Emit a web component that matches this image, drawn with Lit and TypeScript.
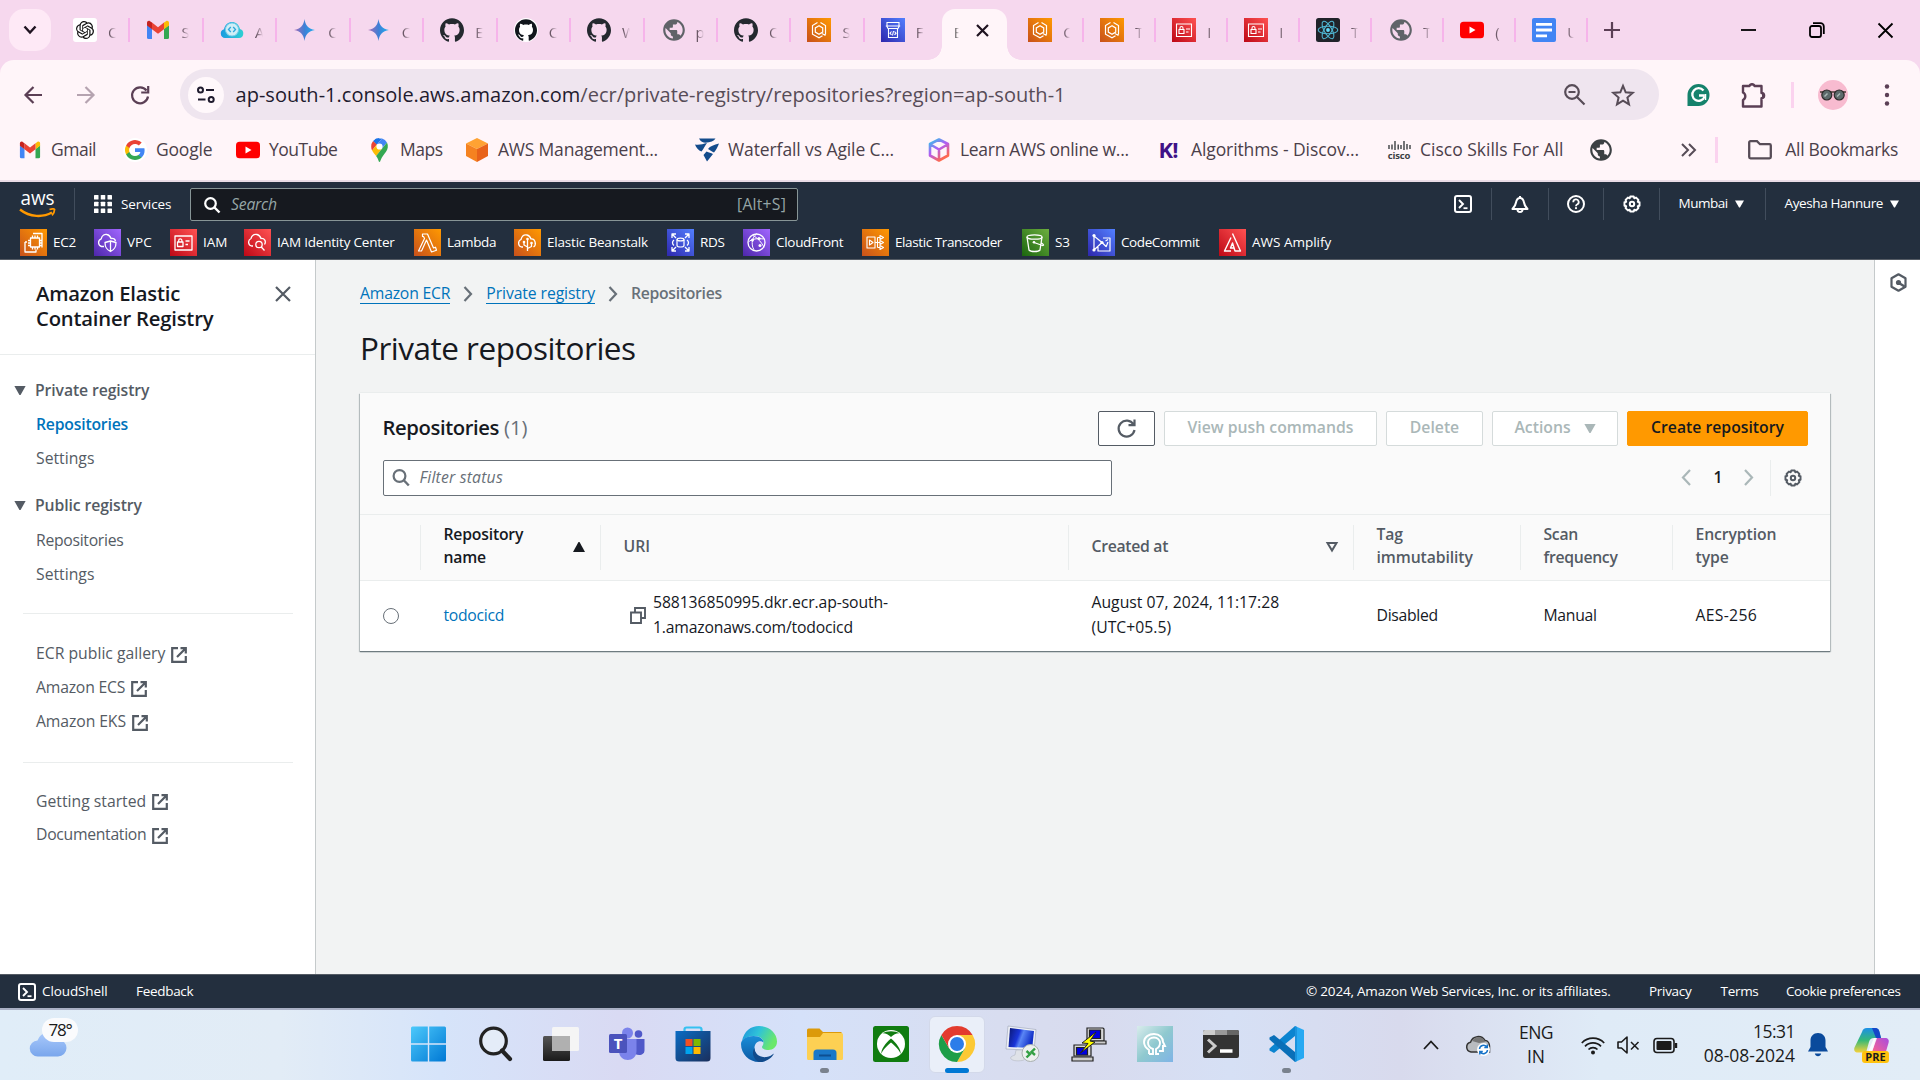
import { LitElement, html, css, svg, type TemplateResult } from "lit";
import { customElement } from "lit/decorators.js";

const GITHUB = "M12 .297c-6.63 0-12 5.373-12 12 0 5.303 3.438 9.8 8.205 11.385.6.113.82-.258.82-.577 0-.285-.01-1.04-.015-2.04-3.338.724-4.042-1.61-4.042-1.61C4.422 18.07 3.633 17.7 3.633 17.7c-1.087-.744.084-.729.084-.729 1.205.084 1.838 1.236 1.838 1.236 1.07 1.835 2.809 1.305 3.495.998.108-.776.417-1.305.76-1.605-2.665-.3-5.466-1.332-5.466-5.93 0-1.31.465-2.38 1.235-3.22-.135-.303-.54-1.523.105-3.176 0 0 1.005-.322 3.3 1.23.96-.267 1.98-.399 3-.405 1.02.006 2.04.138 3 .405 2.28-1.552 3.285-1.23 3.285-1.23.645 1.653.24 2.873.12 3.176.765.84 1.23 1.91 1.23 3.22 0 4.61-2.805 5.625-5.475 5.92.42.36.81 1.096.81 2.22 0 1.606-.015 2.896-.015 3.286 0 .315.21.69.825.57C20.565 22.092 24 17.592 24 12.297c0-6.627-5.373-12-12-12";
const OPENAI = "M22.2819 9.8211a5.9847 5.9847 0 0 0-.5157-4.9108 6.0462 6.0462 0 0 0-6.5098-2.9A6.0651 6.0651 0 0 0 4.9807 4.1818a5.9847 5.9847 0 0 0-3.9977 2.9 6.0462 6.0462 0 0 0 .7427 7.0966 5.98 5.98 0 0 0 .511 4.9107 6.051 6.051 0 0 0 6.5146 2.9001A5.9847 5.9847 0 0 0 13.2599 24a6.0557 6.0557 0 0 0 5.7718-4.2058 5.9894 5.9894 0 0 0 3.9977-2.9001 6.0557 6.0557 0 0 0-.7475-7.0729zm-9.022 12.6081a4.4755 4.4755 0 0 1-2.8764-1.0408l.1419-.0804 4.7783-2.7582a.7948.7948 0 0 0 .3927-.6813v-6.7369l2.02 1.1686a.071.071 0 0 1 .038.052v5.5826a4.504 4.504 0 0 1-4.4945 4.4944zm-9.6607-4.1254a4.4708 4.4708 0 0 1-.5346-3.0137l.142.0852 4.783 2.7582a.7712.7712 0 0 0 .7806 0l5.8428-3.3685v2.3324a.0804.0804 0 0 1-.0332.0615L9.74 19.9502a4.4992 4.4992 0 0 1-6.1408-1.6464zM2.3408 7.8956a4.485 4.485 0 0 1 2.3655-1.9728V11.6a.7664.7664 0 0 0 .3879.6765l5.8144 3.3543-2.0201 1.1685a.0757.0757 0 0 1-.071 0l-4.8303-2.7865A4.504 4.504 0 0 1 2.3408 7.872zm16.5963 3.8558L13.1038 8.364 15.1192 7.2a.0757.0757 0 0 1 .071 0l4.8303 2.7913a4.4944 4.4944 0 0 1-.6765 8.1042v-5.6772a.79.79 0 0 0-.407-.667zm2.0107-3.0231l-.142-.0852-4.7735-2.7818a.7759.7759 0 0 0-.7854 0L9.409 9.2297V6.8974a.0662.0662 0 0 1 .0284-.0615l4.8303-2.7866a4.4992 4.4992 0 0 1 6.6802 4.66zM8.3065 12.863l-2.02-1.1638a.0804.0804 0 0 1-.038-.0567V6.0742a4.4992 4.4992 0 0 1 7.3757-3.4537l-.142.0805L8.704 5.459a.7948.7948 0 0 0-.3927.6813zm1.0976-2.3654l2.602-1.4998 2.6069 1.4998v2.9994l-2.5974 1.4997-2.6067-1.4997Z";
const GLOBE = "M12 2C6.48 2 2 6.48 2 12s4.48 10 10 10 10-4.48 10-10S17.52 2 12 2zm-1 17.93c-3.95-.49-7-3.85-7-7.93 0-.62.08-1.21.21-1.79L9 15v1c0 1.1.9 2 2 2v1.93zm6.9-2.54c-.26-.81-1-1.39-1.9-1.39h-1v-3c0-.55-.45-1-1-1H8v-2h2c.55 0 1-.45 1-1V7h2c1.1 0 2-.9 2-2v-.41c2.93 1.19 5 4.06 5 7.41 0 2.08-.8 3.97-2.1 5.39z";

/** Wraps drawing content in an svg of the given size. */
const ico = (w: number, h: number, vb: string, body: unknown) =>
  html`<svg width=${w} height=${h} viewBox=${vb} fill="none">${body}</svg>`;

const gmail = (s: number) => ico(s, s, "0 0 24 24", svg`
  <path d="M1 19.5V7l5 3.8v10.2H2.5A1.5 1.5 0 0 1 1 19.5z" fill="#4285f4"/>
  <path d="M18 21V10.8L23 7v12.500a1.5 1.5 0 0 1-1.500 1.500z" fill="#34a853"/>
  <path d="M18 4.600L20 3.200c1.300-.9 3 0 3 1.600V7.400l-5 3.800z" fill="#fbbc04"/>
  <path d="M6 11.200V4.600l6 4.600 6-4.600v6.600l-6 4.600z" fill="#ea4335"/>
  <path d="M1 4.800C1 3.200 2.700 2.300 4 3.200l2 1.400v6.600L1 7.400z" fill="#c5221f"/>`);
const cloudCode = ico(24, 24, "0 0 24 24", svg`
  <defs><linearGradient id="cc" x1="0" x2="1"><stop stop-color="#1a9be0"/><stop offset="1" stop-color="#2fd0d2"/></linearGradient></defs>
  <path d="M5 20a4.500 4.500 0 0 1-1-8.800C5 6 8.500 4 12 4s7 2.600 8 7a4.600 4.600 0 0 1-1 9z" fill="url(#cc)"/>
  <circle cx="12" cy="11.500" r="6.600" fill="#cfeef6"/><circle cx="12" cy="11.500" r="6.600" stroke="#6cc9ea" stroke-width="1"/>
  <path d="M10.800 9L8.500 11.500l2.300 2.500M13.200 9l2.300 2.500L13.200 14" stroke="#2fa7dc" stroke-width="1.300"/>`);
const gemini = ico(24, 24, "0 0 24 24", svg`
  <defs><linearGradient id="gm" x1="0" x2="1"><stop stop-color="#a66bb5"/><stop offset=".5" stop-color="#3f7fd6"/><stop offset="1" stop-color="#1cb0f0"/></linearGradient></defs>
  <path d="M11.500 1c.8 6.500 4 10 10.500 11-6.500 1-9.700 4.500-10.500 11C10.700 16.500 7.500 13 1 12c6.500-1 9.700-4.500 10.500-11z" fill="url(#gm)"/>`);
const github = ico(24, 24, "0 0 24 24", svg`<path d=${GITHUB} fill="#24292f"/>`);
const githubWhite = ico(24, 24, "0 0 24 24", svg`<circle cx="12" cy="12" r="12" fill="#fff"/><path transform="translate(1 1) scale(.917)" d=${GITHUB} fill="#11161c"/>`);
const globe = (c: string) => ico(26, 26, "0 0 24 24", svg`<path d=${GLOBE} fill=${c}/>`);
const openai = ico(24, 24, "0 0 24 24", svg`<rect width="24" height="24" rx="3" fill="#fff"/><path transform="translate(3 3) scale(.75)" d=${OPENAI} fill="#111"/>`);
const ecs = ico(24, 24, "0 0 24 24", svg`
  <defs><linearGradient id="og" x1="0" y1="1" x2="1" y2="0"><stop stop-color="#c8511b"/><stop offset="1" stop-color="#ff9900"/></linearGradient></defs>
  <path d="M0 0h24v24H0z" fill="url(#og)"/>
  <path d="M10.500 4.500L5.500 7.500v8.700l6.500 3.600 3.500-2M13.500 4.500l5 3v8.700l-1.500.9M12 7.800L8.300 9.900v4.200L12 16.200l3.700-2.100V9.900zM15 15.500l3.500 2" stroke="#fff" stroke-width="1.200"/>`);
const codeStore = ico(24, 24, "0 0 24 24", svg`
  <defs><linearGradient id="bg" x1="0" y1="1" x2="1" y2="0"><stop stop-color="#2e27ad"/><stop offset="1" stop-color="#527fff"/></linearGradient></defs>
  <path d="M0 0h24v24H0z" fill="url(#bg)"/>
  <path d="M6 4.500h12v4l-1 2H7l-1-2zM4.800 8h14.400M7.500 11v8.500h9V11M10.500 13.500L9 15.200l1.500 1.600M13.500 13.500l1.500 1.700-1.500 1.600M12.500 13l-1 4.500" stroke="#fff" stroke-width="1.100"/>`);
const iamTab = ico(24, 24, "0 0 24 24", svg`
  <defs><linearGradient id="rg" x1="0" y1="1" x2="1" y2="0"><stop stop-color="#bd0816"/><stop offset="1" stop-color="#ff5252"/></linearGradient></defs>
  <path d="M0 0h24v24H0z" fill="url(#rg)"/>
  <path d="M4.500 6h15v12.500h-15zM7 11.500h5v4H7zM8 11.500V10a1.500 1.500 0 0 1 3 0v1.500M14 11h4M14 14h2.500" stroke="#fff" stroke-width="1.100"/>`);
const react = ico(24, 24, "0 0 24 24", svg`
  <rect width="24" height="24" rx="2.500" fill="#20232a"/><circle cx="12" cy="12" r="1.900" fill="#61dafb"/>
  <g stroke="#4fb6d2" stroke-width="1.100"><ellipse cx="12" cy="12" rx="9.800" ry="3.800"/><ellipse cx="12" cy="12" rx="9.800" ry="3.800" transform="rotate(60 12 12)"/><ellipse cx="12" cy="12" rx="9.800" ry="3.800" transform="rotate(120 12 12)"/></g>`);
const youtube = ico(24, 24, "0 0 24 24", svg`<rect y="3.700" width="24" height="16.600" rx="3.500" fill="#f00"/><path d="M9.500 8.500v7l6-3.500z" fill="#fff"/>`);
const docs = ico(24, 24, "0 0 24 24", svg`<rect width="24" height="24" rx="2" fill="#4285f4"/><path d="M4 6.300h16M4 12h16M4 17.800h11" stroke="#fff" stroke-width="2.800"/>`);

const leftTabs: [TemplateResult, string][] = [
  [openai, "C"], [gmail(24), "S"], [cloudCode, "A"], [gemini, "C"], [gemini, "C"], [github, "E"],
  [githubWhite, "C"], [github, "W"], [globe("#5f6368"), "p"], [github, "C"], [ecs, "S"], [codeStore, "F"],
];
const rightTabs: [TemplateResult, string][] = [
  [ecs, "C"], [ecs, "T"], [iamTab, "I"], [iamTab, "I"], [react, "T"], [globe("#5f6368"), "T"], [youtube, "("], [docs, "U"],
];

const google = ico(24, 24, "0 0 24 24", svg`
  <circle cx="12" cy="12" r="12" fill="#fff"/>
  <path d="M21.600 12.200c0-.7-.1-1.400-.2-2H12v3.800h5.400a4.600 4.600 0 0 1-2 3v2.500h3.200c1.900-1.700 3-4.300 3-7.300z" fill="#4285f4"/>
  <path d="M12 22c2.700 0 5-.9 6.600-2.400L15.400 17.100c-.9.600-2 1-3.400 1-2.600 0-4.800-1.800-5.600-4.100H3.100v2.600A10 10 0 0 0 12 22z" fill="#34a853"/>
  <path d="M6.400 13.900a6 6 0 0 1 0-3.800V7.500H3.100a10 10 0 0 0 0 9z" fill="#fbbc05"/>
  <path d="M12 5.900c1.500 0 2.800.5 3.800 1.500l2.900-2.800A10 10 0 0 0 3.100 7.500l3.300 2.600c.8-2.400 3-4.200 5.600-4.200z" fill="#ea4335"/>`);
const maps = ico(17, 24, "0 0 17 24", svg`
  <path d="M8.500 0a8.300 8.300 0 0 0-6.400 3L6 6.300z" fill="#1a73e8"/>
  <path d="M2.100 3A8.500 8.500 0 0 0 .2 8.500c0 1.600.3 2.800.9 4L6 6.300z" fill="#ea4335"/>
  <path d="M11 .4L5.900 6.600 2.500 3.200 5 .8z" fill="#1a73e8"/>
  <path d="M11 .4A8.400 8.400 0 0 1 16 4.500L11 10.500 5.900 6.600z" fill="#4285f4"/>
  <path d="M1.100 12.500c.9 1.900 2.500 3.400 4 5.500L11.200 10.500 5.900 6.600z" fill="#fbbc04"/>
  <path d="M16 4.500c1.600 3.300.8 6.700-1 9.300-2 3-4 4.500-5.400 8.500-.4 1.300-.5 1.700-1.100 1.700s-.8-.5-1.100-1.700A13 13 0 0 0 5.100 18z" fill="#34a853"/>
  <circle cx="8.500" cy="8.500" r="3.100" fill="#fff"/>`);
const cube = ico(22, 24, "0 0 22 24", svg`<path d="M11 0l11 5.500L11 11 0 5.500z" fill="#ffa233"/><path d="M0 5.500L11 11v13L0 18z" fill="#f58220"/><path d="M22 5.500L11 11v13l11-6z" fill="#e8621a"/>`);
const waterfall = ico(24, 24, "0 0 24 24", svg`<path d="M4 .5h16.500c-1.500 2.500-5 4-10 4.200C8 4.600 5.500 3.500 4 .5zM0 6.500c4 .8 8-.5 12-1.500-2 2.500-3 5.500-5.500 8.500-3-1-5.500-4-6.500-7zM24 5.500c-1 3-3 6.500-5 9-2-.8-4.500-3-6-3.500 2-3 6-4 11-5.500zM11.500 13.500c2.500 1 4.500 1.500 6.500 2.500L12 23.500 8.500 17z" fill="#144c8c"/>`);
const learn = ico(22, 24, "0 0 22 24", svg`
  <defs><linearGradient id="ln" x1="0" y1="0" x2=".6" y2="1"><stop stop-color="#2cc8e8"/><stop offset=".5" stop-color="#b05cf5"/><stop offset="1" stop-color="#ff6a4d"/></linearGradient></defs>
  <path d="M11 1.500l9 4.500v11.500L11 22.500l-9-5V6zM2.500 6.500L11 11.500l8.500-5M11 11.500V22" stroke="url(#ln)" stroke-width="2.600" stroke-linejoin="round"/>`);
const cisco = html`<span class="cisco">${ico(23, 11, "0 0 23 11", svg`<path d="M1 5v4M4 4.500v5M7 1v9M10.200 4.500v5M13 5v4M16 1v9M19 4v5.500M22 5v4" stroke="#3c4043" stroke-width="1.400"/>`)}<b>cisco</b></span>`;

const bookmarks: [TemplateResult, string, string][] = [
  [gmail(22), "Gmail", "l5"], [google, "Google", "l2"], [youtube, "YouTube", "l5"], [maps, "Maps", "l5"],
  [cube, "AWS Management...", "l2"], [waterfall, "Waterfall vs Agile C...", "l1"], [learn, "Learn AWS online w...", "l3"],
  [html`<span class="kbang">K!</span>`, "Algorithms - Discov...", "l1"], [cisco, "Cisco Skills For All", "l0"],
];

const S = (d: string, w = 1.3) => svg`<path d=${d} stroke="#fff" stroke-width=${w} stroke-linejoin="round"/>`;
const services: [string, string, string, unknown][] = [
  ["or", "EC2", "l3", svg`${S("M10.500 9h9v9h-9zM12.500 6.500V9M15 6.500V9M17.500 6.500V9M12.500 18v2.500M15 18v2.500M17.500 18v2.500M8 11.500h2.500M8 14h2.500M19.500 11.500H22M19.500 14H22M19.500 16.500H22M8 16.500h2.500")}${S("M13 4.500h9v14M5 13v10h11v-2.500M5 13h2")}`],
  ["pu", "VPC", "l0", svg`${S("M10 17.500H7.500a4 4 0 0 1-.3-7.600C8 6 11 5 13 5.500c2.500.5 3.500 2.500 4 4 2.500-.5 4 .5 4.500 2.500M16.500 12l5.500 1.500c0 5-1.500 7-5.500 9-4-2-5.500-4-5.500-9zM16.500 12v10")}`],
  ["re", "IAM", "l0", svg`${S("M5 7h17v14H5zM7.500 13h5.500v4.500H7.500zM8.700 13v-1.500a1.600 1.600 0 0 1 3.200 0V13M15.500 12h4M15.500 15.500h2.500")}`],
  ["re", "IAM Identity Center", "l2", svg`${S("M9 17H7.500a4 4 0 0 1-.5-7.500C8 6 10.500 5 13 5.500c2.500.5 3.500 2.500 4 4 3.500-.5 5.500 3 3.500 6")}<circle cx="15" cy="15.500" r="3.200" stroke="#fff" stroke-width="1.300"/>${S("M17.300 18l3.200 3.500")}`],
  ["or", "Lambda", "l3", svg`${S("M8.500 5h5l6 14 2-.8 1 3-5 1.800L12.500 11 7.500 22H4.500l6-12.500L9.500 7.500h-1z", 1.200)}`],
  ["or", "Elastic Beanstalk", "l2", svg`${S("M9 18H7.500a4 4 0 0 1-.5-7.500C8 6.500 10.500 5.500 13 6c2.500.5 3.500 2.500 4 4 4-.5 6 5.500 2.500 8M13.500 22V10.500M13.500 18l-3.500-2v-3M13.500 19.500l4-2V14")}<g fill="#fff"><circle cx="13.500" cy="10" r="1.300"/><circle cx="10" cy="13" r="1.300"/><circle cx="17.500" cy="14" r="1.300"/></g>`],
  ["bl", "RDS", "l3", svg`${S("M5 9V5h4M5 5l4 4M18 5h4v4M22 5l-4 4M5 18v4h4M5 22l4-4M22 18v4h-4M22 22l-4-4M7 11c-2 1.500-2 4 0 5.500M20 11c2 1.500 2 4 0 5.500")}<ellipse cx="13.500" cy="10.500" rx="3.500" ry="1.400" stroke="#fff" stroke-width="1.200"/>${S("M10 10.500v6c0 2 7 2 7 0v-6", 1.200)}`],
  ["pu", "CloudFront", "l3", svg`<circle cx="13.500" cy="13.500" r="8.500" stroke="#fff" stroke-width="1.300"/>${S("M13.500 5C8 9 8 18 12 22M10 6.500c4 2 9 7 11 12M5.500 13c3-3 9-4 15-3", 1)}<g fill="#fff"><circle cx="9.500" cy="11" r="1.500"/><circle cx="16" cy="9.500" r="1.500"/><circle cx="17" cy="16.500" r="1.500"/></g>`],
  ["or", "Elastic Transcoder", "l4", svg`${S("M5 8h8v11H5zM7.500 11v5l3.500-2.500zM13 13.500h5M15.500 8.500v10M15.500 8.500H18M15.500 18.500H18M18 6.500v4l3.500-2zM18 11.500v4l3.500-2zM18 16.500v4l3.500-2z", 1.100)}`],
  ["gr", "S3", "l1", svg`<ellipse cx="12.500" cy="8" rx="7.500" ry="2.200" stroke="#fff" stroke-width="1.300"/>${S("M5 8l2 13c1.500 2 9.500 2 11 0l2-13M12 13.500l8.500 3c1.500 0 1.500-1-1-2.500")}<circle cx="12" cy="13.300" r="1.300" fill="#fff"/>`],
  ["bl", "CodeCommit", "l4", svg`${S("M6 7v14M6 7l8 6.500L6 21M15 9h7v13H10v-4M17.500 12l2.500-1.500M20 13l-2 5M14 13.500l4 4", 1.200)}<g fill="#fff"><circle cx="6" cy="6.500" r="1.600"/><circle cx="6" cy="21" r="1.600"/><circle cx="14" cy="13.500" r="1.600"/></g>`],
  ["re", "AWS Amplify", "l0", svg`${S("M13.500 4.500L21.500 22H16l-2.500-8-2 5h3M12 8.500L5.500 22h6.500", 1.400)}`],
];

const ext = ico(16, 16, "0 0 16 16", svg`<path d="M7 1.200H1.200v13.600h13.600V9M9.500 1.200h5.300v5.300M14.500 1.500L6 10" stroke="#545b64" stroke-width="2.200"/>`);
const gear = (c: string) => ico(18, 18, "0 0 18 18", svg`
  <path d="M7.300 1.500h3.400l.6 1.700 1.800-.6 2.300 2.300-.6 1.800 1.700.6v3.400l-1.700.6.6 1.800-2.300 2.300-1.800-.6-.6 1.700H7.300l-.6-1.700-1.800.6-2.300-2.300.6-1.800-1.700-.6V7.300l1.700-.6-.6-1.800 2.300-2.300 1.800.6z" stroke=${c} stroke-width="2" stroke-linejoin="round"/><circle cx="9" cy="9" r="2.200" stroke=${c} stroke-width="2"/>`);
const shell = ico(18, 18, "0 0 18 18", svg`<rect x="1" y="1" width="16" height="16" rx="2" stroke="#fff" stroke-width="2"/><path d="M5 5l4 4-4 4" stroke="#fff" stroke-width="1.900"/><path d="M9.500 13.200h4" stroke="#fff" stroke-width="1.800"/>`);
const tri = (w: number, h: number, c: string) => ico(w, h, "0 0 10 8", svg`<path d="M0 0h10L5.500 8h-1z" fill=${c}/>`);
const crumb = ico(10, 16, "0 0 10 16", svg`<path d="M1.500 1L8 8l-6.500 7" stroke="#687078" stroke-width="2.200"/>`);

const tasks: [TemplateResult, string][] = [
  [ico(36, 36, "0 0 36 36", svg`<defs><linearGradient id="wn" x1="0" y1="0" x2="1" y2="1" gradientUnits="objectBoundingBox"><stop stop-color="#4cc9fb"/><stop offset="1" stop-color="#0078d4"/></linearGradient></defs><path d="M0 2a1.500 1.500 0 0 1 1.500-1.500h15.300v16.800H0zM18.200.5h15.300A1.500 1.500 0 0 1 35 2v15.300H18.200zM0 18.700h16.800v16.800H1.500A1.500 1.500 0 0 1 0 34zM18.200 18.700H35V34a1.500 1.500 0 0 1-1.500 1.500H18.200z" fill="url(#wn)"/>`), ""],
  [ico(34, 36, "0 0 34 36", svg`<circle cx="15.500" cy="15" r="12.800" stroke="#222" stroke-width="3.200" fill="#e4ecf8"/><path d="M24 24.500l8 8.500" stroke="#222" stroke-width="4.200" stroke-linecap="round"/>`), ""],
  [ico(36, 36, "0 0 36 36", svg`<defs><linearGradient id="tv" x1="0" y1="0" x2="0" y2="1"><stop stop-color="#555"/><stop offset="1" stop-color="#1a1a1a"/></linearGradient></defs><rect y="10" width="27" height="25" rx="1.500" fill="url(#tv)"/><rect x="9" y="1" width="27" height="24" rx="1.500" fill="#f5f5f5"/><path d="M9 10h18v15H9z" fill="#b0b0b0"/>`), ""],
  [ico(36, 36, "0 0 36 36", svg`<circle cx="18.500" cy="7" r="5.500" fill="#7b83eb"/><circle cx="29.500" cy="8" r="3.800" fill="#5059c9"/><path d="M26 13h9.500v11c0 5-5 6-9.500 4z" fill="#5059c9"/><path d="M10 13h17.500v12c0 12-17.500 12-17.500 0z" fill="#7b83eb"/><rect y="8" width="18" height="19" rx="1.500" fill="#4b53bc"/><text x="9" y="23" fill="#fff" font-family="Open Sans" font-size="15" font-weight="700" text-anchor="middle">T</text>`), ""],
  [ico(36, 36, "0 0 36 36", svg`<defs><linearGradient id="st" x1="0" y1="0" x2="1" y2="1"><stop stop-color="#0a6cc4"/><stop offset="1" stop-color="#1b2f5c"/></linearGradient></defs><path d="M9.500 6V3.500A2 2 0 0 1 11.500 1.500h13a2 2 0 0 1 2 2V6" stroke="#35c1f1" stroke-width="2.200"/><path d="M.5 5h35v27a3.500 3.500 0 0 1-3.500 3.500H4A3.500 3.500 0 0 1 .5 32z" fill="url(#st)"/><path d="M10.500 13h7v7h-7z" fill="#f25022"/><path d="M18.500 13h7v7h-7z" fill="#7fba00"/><path d="M10.500 21h7v7h-7z" fill="#00a4ef"/><path d="M18.500 21h7v7h-7z" fill="#ffb900"/>`), ""],
  [ico(36, 36, "0 0 36 36", svg`<defs><linearGradient id="e1" x1="0" y1="0" x2="1" y2=".4"><stop stop-color="#1c8fdc"/><stop offset=".5" stop-color="#2fc3d8"/><stop offset="1" stop-color="#6be86a"/></linearGradient><linearGradient id="e2" x1="0" y1="0" x2="0" y2="1"><stop stop-color="#1a8ed8"/><stop offset="1" stop-color="#0c59a4"/></linearGradient></defs><path d="M1 15C3 5 10 0 18 0c10 0 18 7 18 15.500 0 5.500-4 8.500-8.500 8.500-4 0-6.500-1.500-6.500-3 0-1 1.500-1.500 1.500-4.500 0-3.500-3.500-6.500-8.500-6.500C8 10 3.500 12 1 15z" fill="url(#e1)"/><path d="M0 18c0-4 5-8 12.500-8 7 0 10 3.500 10 6.500-3-3-9-1-9 5.500 0 7 6 12.500 12 12.500-2 1-4.500 1.500-7.500 1.500C8 36 0 28 0 18z" fill="url(#e2)"/><path d="M13.500 22c0 6 6 10 12 9 3-.5 5.500-2 7.500-3.500C30 33 25 36 18 36c-5-2-8-9-4.500-14z" fill="#114a8b"/>`), ""],
  [ico(36, 36, "0 0 36 36", svg`<path d="M0 4a1.500 1.500 0 0 1 1.500-1.500h11L16 6h18.500V12H0z" fill="#dc9a0a"/><path d="M0 11h13l3-4h18.500A1.500 1.500 0 0 1 36 8.500v24a1.500 1.500 0 0 1-1.500 1.500h-33A1.500 1.500 0 0 1 0 32.500z" fill="#fdd053"/><path d="M6.500 34v-7a3.500 3.500 0 0 1 3.500-3.500h16a3.500 3.500 0 0 1 3.500 3.500v7z" fill="#1a78c8"/><path d="M12 29.500h12" stroke="#0d4f92" stroke-width="2"/>`), "dot"],
  [ico(36, 36, "0 0 36 36", svg`<rect width="36" height="36" rx="2.500" fill="#107c10"/><circle cx="18" cy="18" r="14" fill="#fff"/><path d="M9.500 7.300C12.500 7 15.500 8.700 18 11c2.500-2.300 5.500-4 8.500-3.700C23 4.500 13 4.500 9.500 7.300zM18 16.500c4 3 9 8.500 9.500 11.500 1-4-4-11-9.500-15.500C12.500 17 7.500 24 8.500 28c.5-3 5.500-8.500 9.500-11.500z" fill="#107c10"/>`), ""],
  [ico(36, 36, "0 0 36 36", svg`<path d="M18 9h15.600A18 18 0 0 1 18 36l7.800-13.500z" fill="#fcc934"/><path d="M10.200 22.500L2.400 9A18 18 0 0 0 18 36l7.800-13.500z" fill="#1e9e48"/><path d="M18 9h15.600A18 18 0 0 0 2.400 9l7.800 13.500z" fill="#e33b2e"/><circle cx="18" cy="18" r="9" fill="#fff"/><circle cx="18" cy="18" r="7" fill="#2b7de9"/>`), "on"],
  [ico(36, 36, "0 0 36 36", svg`<defs><linearGradient id="rd" x1="0" y1="0" x2="1" y2=".3"><stop stop-color="#0a1670"/><stop offset=".45" stop-color="#1a35d8"/><stop offset=".6" stop-color="#5a86f5"/><stop offset="1" stop-color="#1230c8"/></linearGradient></defs><path d="M3 0l28 3.500-2 21L1 23z" fill="#eef1f6" stroke="#9aa3b5" stroke-width=".6"/><path d="M5 2l24 3-1.800 17L3.500 21z" fill="url(#rd)"/><path d="M11 24h7l1 6c2 1 2 4-2 4.500-5 1-11 0-11.500-2.500 0-1.500 3-2.500 4.500-3z" fill="#dfe2e8" stroke="#b3b8c2" stroke-width=".6"/><circle cx="25.500" cy="27" r="8.500" fill="#edf0ee" stroke="#a9b0ae"/><path d="M21.500 25l3.500 3-3.500 3.500M30 22.500L26.500 26l3.500 3" stroke="#34a043" stroke-width="2.400"/>`), ""],
  [ico(36, 36, "0 0 36 36", svg`<g stroke="#222" stroke-width="1.200"><path d="M16 2h16l1 1v12H16z" fill="#d8d8d8"/><path d="M18.500 4h11v8.500h-11z" fill="#0000e0"/><path d="M17 15h18v3H17z" fill="#ccc"/><path d="M3 19h16l1 1v10H3z" fill="#d8d8d8"/><path d="M5.500 21.500h11V29h-11z" fill="#0000e0"/><path d="M1 31h21v4H1z" fill="#ccc"/><path d="M25 6l-14 11 6 .5L9.500 27 24 16l-5-1z" fill="#ff0" stroke-width="1"/></g>`), ""],
  [ico(36, 36, "0 0 36 36", svg`<defs><linearGradient id="hd" x1="0" y1="0" x2="1" y2="1"><stop stop-color="#d9ecec"/><stop offset=".5" stop-color="#8fc9cf"/><stop offset="1" stop-color="#7fb4e6"/></linearGradient></defs><path d="M0 0h36v36H0z" fill="url(#hd)"/><path d="M12 28v-4c-3-2-5-5-5-8C7 11 12 8 17 8c6 0 9 4 9 8l2 4h-2v5h-4M12 28h4v-5c-3-1-5-3.500-5-6.500 0-3 2.500-5 6-5s6 2.500 6 5.500-2 5-4 6v5h3" stroke="#fff" stroke-width="1.900"/>`), ""],
  [ico(36, 30, "0 0 36 30", svg`<rect y="1" width="36" height="28" rx="2" fill="#333"/><path d="M0 6V3a2 2 0 0 1 2-2h10v5z" fill="#ccc"/><path d="M12 1h12v5H12z" fill="#999"/><path d="M24 1h10a2 2 0 0 1 2 2v3H24z" fill="#666"/><path d="M5 10.500l7 6.500-7 6.500" stroke="#ccc" stroke-width="3"/><path d="M17 22h12.500" stroke="#fff" stroke-width="3.500"/>`), ""],
  [ico(36, 36, "0 0 36 36", svg`<path d="M26 0l9 4v28l-9 4z" fill="#27a9f2"/><path d="M26 0v10L5 27 .5 24.500v-2z" fill="#0b84d0"/><path d="M.5 13.500v-2L5 9l21 17v10z" fill="#0a6fb8"/><path d="M26 0l2 1v34l-2 1z" fill="#1b93dd"/>`), "dot"],
];

@customElement("app-root")
export class AppRoot extends LitElement {
  static styles = css`
    :host { display: flex; flex-direction: column; width: 1920px; height: 1080px; overflow: hidden;
      font-family: "Open Sans", "Noto Sans", sans-serif; font-size: 15.75px; line-height: 22.5px; color: #16191f; white-space: nowrap; }
    * { box-sizing: border-box; }
    svg { display: block; flex: none; overflow: visible; }
    .l1 { letter-spacing: -.1px } .l2 { letter-spacing: -.2px } .l3 { letter-spacing: -.3px }
    .l4 { letter-spacing: -.4px } .l5 { letter-spacing: -.5px } .p1 { letter-spacing: .1px } .p2 { letter-spacing: .2px } .p3 { letter-spacing: .3px }

    .strip { height: 60px; background: #f6d8ee; display: flex; align-items: center; padding-left: 9px; flex: none; }
    .drop { width: 42px; height: 42px; border-radius: 15px; background: #fee9f6; display: grid; place-items: center; margin-right: 6px; }
    .tab { width: 73.45px; height: 24px; padding-left: 16px; display: flex; align-items: center; border-right: 2.500px solid #f6b4ea; }
    .tab.last { border-color: transparent; }
    .tab.r { width: 72px; }
    .fav { width: 24px; display: grid; place-items: center; }
    .ttl { width: 8px; margin-left: 11px; overflow: hidden; font-size: 15px; line-height: 24px; color: #4a3a46; padding-top: 3px;
      mask-image: linear-gradient(90deg, #000, transparent); }
    .r .ttl { width: 7px; }
    .active { width: 65px; height: 51px; margin: 0 5.500px 0 3.600px; align-self: flex-end; background: #fff5f9; border-radius: 13px 13px 0 0;
      display: flex; align-items: center; position: relative; padding: 0 18px 9px 12px; justify-content: space-between; }
    .active::before, .active::after { content: ""; position: absolute; bottom: 0; width: 14px; height: 14px; }
    .active::before { left: -14px; background: radial-gradient(circle at 0 0, transparent 13.500px, #fff5f9 14px); }
    .active::after { right: -14px; background: radial-gradient(circle at 100% 0, transparent 13.500px, #fff5f9 14px); }
    .active .ttl { margin: 0; width: 5px; color: #1f1f1f; }
    .plus { margin-left: 16px; }
    .win { margin-left: auto; display: flex; gap: 53px; padding-right: 27px; align-items: center; }

    .chrome { background: linear-gradient(#f6d8ee 14px, #fff5f9 14px); flex: none; height: 122px; border-bottom: 2px solid #eadde7; }
    .bar { height: 69px; background: #fff5f9; border-radius: 14px 14px 0 0; display: flex; align-items: center; padding-left: 24px; }
    .navs { display: flex; gap: 35px; width: 156px; }
    .pill { width: 1479px; height: 51px; border-radius: 26px; background: #efe5ef; display: flex; align-items: center; padding: 0 24px 0 8px; }
    .tune { width: 36px; height: 36px; border-radius: 50%; background: #fff8fb; display: grid; place-items: center; margin-right: 11.500px; }
    .url { font-size: 20px; line-height: 28px; letter-spacing: .015px; color: #1f1b2e; flex: 1; }
    .url span { color: #574c57; }
    .pill .star { margin-left: 26px; }
    .exts { flex: 1; display: grid; grid-template-columns: 54px 50px 27px 66px 1fr; align-items: center; padding-left: 28px; }
    .vr { width: 2.500px; height: 26px; background: #fbd3ef; }
    .marks { height: 42px; display: grid; align-items: center; padding-left: 18px; font-size: 17.500px; color: #4b3f4a;
      grid-template-columns: 105px 113px 131px 98px 230px 232px 231px 229px 201px 93px 34px 33px 1fr; }
    .bm { display: flex; align-items: center; }
    .bm .i { display: grid; place-items: center; width: 24px; margin-right: 9px; }
    .bm span { padding-bottom: 1px; }
    .bm .kbang { font: 700 22px/24px "Open Sans", sans-serif; color: #3f1287; letter-spacing: -1px; padding-bottom: 3px; margin-left: -4px; }
    .bm .cisco { display: flex; flex-direction: column; align-items: center; }
    .cisco b { font-size: 9.500px; line-height: 9px; color: #3c4043; letter-spacing: -.2px; }

    .aws { height: 78px; flex: none; background: #232f3e; border-bottom: 1px solid #545b64; color: #fff; font-size: 13.500px; font-weight: 500; }
    .row1 { height: 44px; display: flex; align-items: center; padding: 0 21px 0 20px; }
    .logo { width: 54px; }
    .logo text { font: 500 20px "Open Sans", sans-serif; }
    .sep { width: 1px; height: 32px; background: #414d5c; }
    .svc { display: flex; gap: 9px; align-items: center; padding-left: 19px; width: 115px; }
    .find { width: 608px; height: 33px; background: #16191f; border: 1px solid #879596; border-radius: 2px; display: flex; align-items: center; padding: 1px 11px 0 13px; color: #95a5a6; font-size: 15.750px; font-weight: 400; }
    .find i { margin-left: 11px; flex: 1; }
    .tools { margin-left: auto; display: grid; grid-template-columns: 37px 20px 37px 19px 36px 20px 36px 20px 86px 20px auto; align-items: center; }
    .tools .m { display: flex; align-items: center; gap: 7px; padding-bottom: 2px; }
    .tools .m svg { margin-top: 2px; }
    .row2 { height: 33px; display: grid; padding-left: 20px; align-items: center;
      grid-template-columns: 74px 76px 74px 170px 100px 153px 76px 119px 160px 66px 131px auto; }
    .sv { display: flex; align-items: center; gap: 6px; }
    .sv span { padding-bottom: 1px; }
    .sq { width: 27px; height: 27px; }
    .or { background: linear-gradient(45deg, #c8511b, #ff9900); }
    .pu { background: linear-gradient(45deg, #4d27aa, #a166ff); }
    .re { background: linear-gradient(45deg, #bd0816, #ff5252); }
    .bl { background: linear-gradient(45deg, #2e27ad, #527fff); }
    .gr { background: linear-gradient(45deg, #1b660f, #6cae3e); }

    .body { height: 714px; flex: none; display: grid; grid-template-columns: 316px 1fr 46px; background: #f2f3f3; }
    .side { background: #fff; border-right: 1px solid #c5cacb; color: #545b64; }
    .sh { height: 95px; border-bottom: 1px solid #eaeded; padding: 21px 24px 0 36px; display: flex; justify-content: space-between; font-size: 20.250px; line-height: 24.750px; font-weight: 600; color: #16191f; }
    .sh svg { margin-top: 5px; }
    .nav { padding-top: 18px; display: flex; flex-direction: column; }
    .g, .n { height: 34px; display: flex; align-items: center; padding-top: 1px; }
    .g { padding-left: 14px; gap: 9px; font-weight: 600; }
    .g.two { margin: 13px 0 1px; }
    .n { padding-left: 36px; gap: 6px; }
    .n.cur { color: #0073bb; font-weight: 600; }
    .n svg { margin-top: 2px; }
    .nav hr { width: 270px; height: 1px; border: 0; background: #eaeded; margin: 22px 0 22px 23px; flex: none; }
    .nav hr.b { margin: 24px 0 21px 23px; }
    .n.end { height: 33px; }
    .rail { background: #fff; border-left: 1px solid #c5cacb; padding: 13px 0 0 15px; }
    .main { padding: 21.500px 44px 0; }
    .crumbs { display: flex; align-items: center; height: 23px; }
    .crumbs a { color: #0073bb; border-bottom: 1.500px solid #0073bb; line-height: 20px; }
    .crumbs svg { margin: 1px 13.500px 0 12.500px; }
    .crumbs b { font-weight: 600; color: #687078; }
    h1 { font-size: 31.500px; line-height: 40px; font-weight: 400; margin: 23px 0 25px; }
    .card { height: 258px; background: #fff; box-shadow: 0 1px 1px #6f7b80, 1px 1px 1px #c2c8c9, -1px 1px 1px #c2c8c9, 0 -1px 0 #eaeded; }
    .ch { height: 122px; background: #fafafa; border-bottom: 1px solid #eaeded; padding: 18px 22px 0 22.500px; }
    .r { display: flex; align-items: center; }
    .cr { height: 35px; gap: 9px; }
    .cr h2 { font-size: 20.250px; line-height: 24px; font-weight: 600; margin: 0 auto 3px 0; }
    .cr h2 span { color: #687078; font-weight: 400; letter-spacing: 0; }
    .btn { height: 35px; border: 1px solid #d5dbdb; border-radius: 2px; background: #fff; color: #aab7b8; font-weight: 600; display: flex; align-items: center; justify-content: center; gap: 13px; padding-bottom: 2px; }
    .btn.rf { width: 57px; border-color: #545b64; padding: 0; }
    .btn.b1 { width: 213px } .btn.b2 { width: 97px } .btn.b3 { width: 126px }
    .btn.b4 { width: 181px; background: #ff9900; border-color: #ff9900; color: #16191f; }
    .btn svg { margin-top: 2px; }
    .btn.rf svg { margin: 0; }
    .fl { height: 36px; margin-top: 14px; }
    .filter { width: 729px; height: 36px; background: #fff; border: 1px solid #687078; border-radius: 2px; display: flex; align-items: center; padding: 0 0 1px 8px; gap: 10px; color: #687078; }
    .pg { margin-left: auto; display: grid; grid-template-columns: 33px 30px 26px 14px auto; align-items: center; padding-right: 6.500px; font-weight: 600; }
    .pg s { width: 1px; height: 36px; background: #eaeded; }
    .tr { display: grid; grid-template-columns: 60px 180px 468px 285px 167px 152px 1fr; align-items: center; }
    .th { height: 66px; background: #fafafa; border-bottom: 1px solid #eaeded; font-weight: 600; color: #545b64; line-height: 22.900px; }
    .th > div { height: 45px; border-left: 1px solid #eaeded; padding: 0 15.500px 0 22.500px; display: flex; align-items: center; justify-content: space-between; }
    .th > div:first-child { border: 0; }
    .th span { padding-bottom: 2px; }
    .th .cur { color: #16191f; }
    .td { height: 70px; line-height: 24.750px; }
    .td > div { padding: 0 0 1px 23.500px; display: flex; align-items: center; }
    .td > div:first-child { padding-left: 22.500px; }
    .radio { width: 16px; height: 16px; border-radius: 50%; border: 1px solid #687078; margin-top: 1px; }
    .td .uri { gap: 7.500px; padding-left: 29.500px; }
    .link { color: #0073bb; }

    .foot { height: 34px; flex: none; background: #232f3e; border-top: 1px solid #545b64; color: #fff; font-size: 13.500px; font-weight: 500; display: grid; align-items: center; padding-left: 18px;
      grid-template-columns: 24px 94px 1170px 343px 71.500px 65.500px 1fr; }
    .foot span { padding-bottom: 1px; }

    .task { height: 72px; border-top: 2px solid #a9b0c4; display: flex; align-items: center; color: #1b1b1b;
      background: linear-gradient(90deg, #e0edf8 0, #e2ecf6 280px, #d6e4fa 440px, #d9daf3 620px, #d5e1f9 800px, #d8ddf0 1000px, #d8dbee 1090px, #d6e0f5 1230px, #d8daed 1400px, #dfebf7 1600px, #e2edf7 1920px); }
    .wx { width: 365px; height: 70px; padding: 9px 0 0 30px; margin-right: 30.500px; position: relative; }
    .badge { position: absolute; left: 42px; top: 8px; width: 36px; height: 24px; border-radius: 12px; background: #fafbfd; font-size: 17px; line-height: 24px; text-align: center; letter-spacing: -1.200px; }
    .cell { width: 66px; height: 70px; display: grid; place-items: center; position: relative; }
    .cell.on::before { content: ""; position: absolute; left: 5px; right: 5px; top: 6px; bottom: 7px; border-radius: 6px; background: #eaeff9; border: 1px solid #d3d9ea; }
    .cell svg { position: relative; top: -1px; }
    .cell.on::after { content: ""; position: absolute; left: 21px; width: 24px; bottom: 7px; height: 5px; border-radius: 3px; background: #0078d4; }
    .cell.dot::after { content: ""; position: absolute; left: 28.500px; width: 9px; bottom: 7px; height: 5px; border-radius: 3px; background: #7a828e; }
    .tray { flex: 1; display: grid; grid-template-columns: 42px 42px 58px 16px 36px 36px 61px 81px 13px 46px auto; align-items: center; padding-left: 103.500px; font-size: 17.500px; line-height: 24px; }
    .lang { text-align: center; padding-bottom: 3px; }
    .time { text-align: right; padding-bottom: 5px; width: 96px; justify-self: end; }
    .cop { position: relative; }
    .pre { position: absolute; left: 8px; top: 23px; width: 27px; height: 12px; background: #ffc20f; border-radius: 3px; font-size: 11px; line-height: 12px; font-weight: 700; text-align: center; }
  `;

  private tab(t: [TemplateResult, string], cls: string) {
    return html`<div class="tab ${cls}"><span class="fav">${t[0]}</span><span class="ttl">${t[1]}</span></div>`;
  }

  private browser() {
    return html`
      <div class="strip">
        <div class="drop">${ico(14, 10, "0 0 14 10", svg`<path d="M1.500 1.500L7 7.500l5.500-6" stroke="#1f1320" stroke-width="2.400"/>`)}</div>
        ${leftTabs.map((t, i) => this.tab(t, i === 11 ? "last" : ""))}
        <div class="active"><span class="ttl">E</span>${ico(13, 13, "0 0 13 13", svg`<path d="M1 1l11 11M12 1L1 12" stroke="#1f1320" stroke-width="2.200"/>`)}</div>
        ${rightTabs.map((t) => this.tab(t, "r"))}
        <div class="plus">${ico(16, 16, "0 0 16 16", svg`<path d="M8 0v16M0 8h16" stroke="#5b3f55" stroke-width="2.200"/>`)}</div>
        <div class="win">
          ${ico(15, 16, "0 0 15 16", svg`<path d="M0 8h15" stroke="#000" stroke-width="1.800"/>`)}
          ${ico(16, 16, "0 0 16 16", svg`<rect x="1" y="4" width="11" height="11" rx="2" stroke="#000" stroke-width="1.800"/><path d="M4 1.200h7.500a3.300 3.300 0 0 1 3.300 3.300V12" stroke="#000" stroke-width="1.800"/>`)}
          ${ico(15, 15, "0 0 15 15", svg`<path d="M.5.5l14 14M14.500.5l-14 14" stroke="#000" stroke-width="1.800"/>`)}
        </div>
      </div>
      <div class="chrome">
        <div class="bar">
          <div class="navs">
            ${ico(18, 18, "0 0 18 18", svg`<path d="M18 9H2M9.500 1L1.500 9l8 8" stroke="#5b3f55" stroke-width="2.200"/>`)}
            ${ico(18, 18, "0 0 18 18", svg`<path d="M0 9h16M8.500 1l8 8-8 8" stroke="#b5a3b0" stroke-width="2.200"/>`)}
            ${ico(20, 18, "0 0 20 18", svg`<path d="M16.500 4.500A8 8 0 1 0 18 10.500M18.200 0v6.500h-7" stroke="#5b3f55" stroke-width="2.200"/>`)}
          </div>
          <div class="pill">
            <div class="tune">${ico(18, 18, "0 0 18 18", svg`<g stroke="#1f1b2e" stroke-width="2"><circle cx="3.500" cy="4" r="2.500"/><path d="M9 4h8M1 13.500h7.500"/><circle cx="14.200" cy="13.500" r="2.500"/></g>`)}</div>
            <div class="url">ap-south-1.console.aws.amazon.com<span>/ecr/private-registry/repositories?region=ap-south-1</span></div>
            ${ico(21, 21, "0 0 21 21", svg`<circle cx="8" cy="8" r="6.800" stroke="#574c57" stroke-width="2.200"/><path d="M4.500 8h7M13 13l7.500 7.500" stroke="#574c57" stroke-width="2.200"/>`)}
            <svg class="star" width="24" height="24" viewBox="0 0 24 24" fill="none"><path d="M12 2.800l2.700 6.500 7 .6-5.300 4.600 1.600 6.900-6-3.700-6 3.700 1.600-6.900L2.300 9.900l7-.6z" stroke="#574c57" stroke-width="2"/></svg>
          </div>
          <div class="exts">
            ${ico(23, 24, "0 0 23 24", svg`<path d="M11.500 1A11 11 0 0 1 11.500 23H0.500V12A11 11 0 0 1 11.500 1z" fill="#15826c"/><path d="M16.500 7.500A6.300 6.300 0 1 0 17.600 13.500M17.800 12.500H12" stroke="#fff" stroke-width="2.300"/><path d="M18.500 11v6" stroke="#fff" stroke-width="1.500"/>`)}
            ${ico(26, 26, "0 0 26 26", svg`<path d="M2 4h6.500a2.600 2.600 0 0 1 5 0H20.500v7a2.600 2.600 0 0 1 0 5.200V24.500H2v-6.500a4.200 4.200 0 0 0 0-7.500z" stroke="#5b3f55" stroke-width="2.400" stroke-linejoin="round"/><path d="M8.500 3.500a2.600 2.600 0 0 1 5 0zM21 11.500a2.600 2.600 0 0 1 0 5.200z" fill="#5b3f55"/>`)}
            <div class="vr"></div>
            ${ico(30, 30, "0 0 30 30", svg`<circle cx="15" cy="15" r="15" fill="#f8bbd0"/><path d="M2 12h26" stroke="#4a3a35" stroke-width="1.500"/><circle cx="8.800" cy="15" r="5" fill="#5d6a6b" stroke="#2e2a2a" stroke-width="1.200"/><circle cx="21.200" cy="15" r="5" fill="#5d6a6b" stroke="#2e2a2a" stroke-width="1.200"/><path d="M6.500 16.500l3-3M19 16.500l3-3" stroke="#a9b8b6" stroke-width="1.500"/>`)}
            ${ico(6, 22, "0 0 6 22", svg`<g fill="#5b3f55"><circle cx="3" cy="2.500" r="2.200"/><circle cx="3" cy="11" r="2.200"/><circle cx="3" cy="19.500" r="2.200"/></g>`)}
          </div>
        </div>
        <div class="marks">
          ${bookmarks.map(([i, t, l]) => html`<div class="bm"><div class="i">${i}</div><span class=${l}>${t}</span></div>`)}
          <div>${globe("#3c4043")}</div>
          ${ico(15, 14, "0 0 15 14", svg`<path d="M1 1l6 6-6 6M8 1l6 6-6 6" stroke="#574c57" stroke-width="2"/>`)}
          <div class="vr"></div>
          <div class="bm"><div class="i">${ico(24, 20, "0 0 24 20", svg`<path d="M1.200 17V2.500A1.300 1.300 0 0 1 2.500 1.200H9l3 3h9.500A1.300 1.300 0 0 1 22.800 5.500V17a1.300 1.300 0 0 1-1.300 1.300h-19A1.300 1.300 0 0 1 1.200 17z" stroke="#574c57" stroke-width="2.300"/>`)}</div><span class="l3">&nbsp;All Bookmarks</span></div>
        </div>
      </div>`;
  }

  private awsNav() {
    return html`<div class="aws">
      <div class="row1">
        <svg class="logo" width="54" height="30" viewBox="0 0 54 30"><text x="0.500" y="16" fill="#fff" textLength="34" lengthAdjust="spacingAndGlyphs">aws</text><path d="M0 20.500c10 8 23 8 32 3" fill="none" stroke="#f90" stroke-width="2.400"/><path d="M29.500 20.500c3-1.200 5.500-.6 5 .3 0 1.700-1 4-2.500 5.500" fill="none" stroke="#f90" stroke-width="1.800"/></svg>
        <div class="sep"></div>
        <div class="svc">${ico(18, 18, "0 0 18 18", svg`<g fill="#fff">${[0, 6.75, 13.5].map((y) => [0, 6.75, 13.5].map((x) => svg`<rect x=${x} y=${y} width="4.500" height="4.500" rx=".6"/>`))}</g>`)}<span class="l1">Services</span></div>
        <div class="find">${ico(16, 16, "0 0 16 16", svg`<circle cx="6.500" cy="6.500" r="5.300" stroke="#fff" stroke-width="2.200"/><path d="M10.500 10.500l5 5" stroke="#fff" stroke-width="2.400"/>`)}<i class="l2">Search</i><span class="p2">[Alt+S]</span></div>
        <div class="tools">
          ${shell}<div class="sep"></div>
          ${ico(18, 19, "0 0 18 19", svg`<path d="M9 1v2M9 3c-3 0-3.500 2-4 4.500C4.500 10.500 3.500 12 1.500 14h15c-2-2-3-3.500-3.500-6.500C12.500 5 12 3 9 3z" stroke="#fff" stroke-width="2" stroke-linejoin="round"/><path d="M6.500 14.500a2.500 2.500 0 0 0 5 0" stroke="#fff" stroke-width="2"/>`)}<div class="sep"></div>
          ${ico(18, 18, "0 0 18 18", svg`<circle cx="9" cy="9" r="8" stroke="#fff" stroke-width="2"/><path d="M6.300 7.200a2.700 2.700 0 1 1 3.800 2.300c-.8.4-1.100.8-1.100 1.700" stroke="#fff" stroke-width="1.800"/><circle cx="9" cy="13.200" r="1.100" fill="#fff"/>`)}<div class="sep"></div>
          ${gear("#fff")}<div class="sep"></div>
          <div class="m"><span class="l5">Mumbai</span>${tri(9, 8, "#fff")}</div><div class="sep"></div>
          <div class="m"><span class="l4">Ayesha Hannure</span>${tri(9, 8, "#fff")}</div>
        </div>
      </div>
      <div class="row2">${services.map(([c, t, l, i]) => html`<div class="sv"><div class="sq ${c}">${ico(27, 27, "0 0 27 27", i)}</div><span class=${l}>${t}</span></div>`)}</div>
    </div>`;
  }

  private sidebar() {
    const t = tri(12, 9, "#545b64");
    return html`<div class="side">
      <div class="sh"><div><div class="l2">Amazon Elastic</div><div class="l2">Container Registry</div></div>
        ${ico(16, 16, "0 0 16 16", svg`<path d="M1 1l14 14M15 1L1 15" stroke="#545b64" stroke-width="2.200"/>`)}</div>
      <div class="nav">
        <div class="g">${t}<span class="l1">Private registry</span></div>
        <div class="n cur"><span class="l2">Repositories</span></div>
        <div class="n"><span>Settings</span></div>
        <div class="g two">${t}<span class="l1">Public registry</span></div>
        <div class="n"><span class="l3">Repositories</span></div>
        <div class="n"><span>Settings</span></div>
        <hr>
        <div class="n"><span>ECR public gallery</span>${ext}</div>
        <div class="n"><span class="l2">Amazon ECS</span>${ext}</div>
        <div class="n"><span class="l1">Amazon EKS</span>${ext}</div>
        <hr class="b">
        <div class="n end"><span>Getting started</span>${ext}</div>
        <div class="n"><span class="l3">Documentation</span>${ext}</div>
      </div>
    </div>`;
  }

  private content() {
    return html`<div class="main">
      <div class="crumbs"><a class="l2">Amazon ECR</a>${crumb}<a class="l1">Private registry</a>${crumb}<b class="l3">Repositories</b></div>
      <h1 class="l5">Private repositories</h1>
      <div class="card">
        <div class="ch">
          <div class="r cr">
            <h2 class="l4">Repositories <span>(1)</span></h2>
            <div class="btn rf">${ico(19, 19, "0 0 19 19", svg`<path d="M16.500 5.500A8 8 0 1 0 17.500 11M17.500 .5V6.200h-6" stroke="#545b64" stroke-width="2.200"/>`)}</div>
            <div class="btn b1">View push commands</div>
            <div class="btn b2">Delete</div>
            <div class="btn b3"><span>Actions</span>${tri(12, 9, "#aab7b8")}</div>
            <div class="btn b4">Create repository</div>
          </div>
          <div class="r fl">
            <div class="filter">${ico(18, 17, "0 0 18 17", svg`<circle cx="7.500" cy="7" r="5.900" stroke="#687078" stroke-width="2.200"/><path d="M11.800 11.200l5 5.300" stroke="#687078" stroke-width="2.400"/>`)}<i class="p2">Filter status</i></div>
            <div class="pg">
              ${ico(10, 17, "0 0 10 17", svg`<path d="M9 1L2 8.500 9 16" stroke="#aab7b8" stroke-width="2.200"/>`)}
              <span>1</span>
              ${ico(10, 17, "0 0 10 17", svg`<path d="M1 1l7 7.500L1 16" stroke="#aab7b8" stroke-width="2.200"/>`)}
              <s></s>${gear("#545b64")}
            </div>
          </div>
        </div>
        <div class="tr th">
          <div></div>
          <div class="cur"><span class="l2">Repository<br>name</span>${ico(12, 10, "0 0 12 10", svg`<path d="M5.500 0h1L12 10H0z" fill="#16191f"/>`)}</div>
          <div><span>URI</span></div>
          <div><span class="l3">Created at</span>${ico(12, 10, "0 0 12 10", svg`<path d="M1.500 1h9L6 8.500z" stroke="#545b64" stroke-width="2"/>`)}</div>
          <div><span class="l1">Tag<br>immutability</span></div>
          <div><span class="l3">Scan<br>frequency</span></div>
          <div><span class="l1">Encryption<br>type</span></div>
        </div>
        <div class="tr td">
          <div><div class="radio"></div></div>
          <div><span class="link l3">todocicd</span></div>
          <div class="uri">${ico(16, 17, "0 0 16 17", svg`<path d="M5 1h10v10H5z" stroke="#545b64" stroke-width="1.900"/><path d="M1 5.500h10V16H1z" fill="#fff" stroke="#545b64" stroke-width="1.900"/>`)}<span><span class="l1">588136850995.dkr.ecr.ap-south-</span><br><span class="l2">1.amazonaws.com/todocicd</span></span></div>
          <div><span>August 07, 2024, 11:17:28<br>(UTC+05.5)</span></div>
          <div><span class="l3">Disabled</span></div>
          <div><span class="l3">Manual</span></div>
          <div><span class="p3">AES-256</span></div>
        </div>
      </div>
    </div>`;
  }

  private taskbar() {
    return html`<div class="task">
      <div class="wx">${ico(37, 40, "0 0 37 40", svg`<defs><linearGradient id="cl" x1="0" y1="0" x2="0" y2="1"><stop stop-color="#a9c9fb"/><stop offset="1" stop-color="#79a6ec"/></linearGradient></defs><path d="M8 37.500a8 8 0 0 1-.5-16A11 11 0 0 1 28 20.500a8.500 8.500 0 0 1 0 17z" fill="url(#cl)"/>`)}<div class="badge">78°</div></div>
      ${tasks.map(([i, c]) => html`<div class="cell ${c}">${i}</div>`)}
      <div class="tray">
        ${ico(16, 10, "0 0 16 10", svg`<path d="M1 9l7-7.500L15 9" stroke="#1b1b1b" stroke-width="1.800"/>`)}
        ${ico(26, 22, "0 0 26 22", svg`<path d="M6 18a5 5 0 0 1-.5-9.800A8 8 0 0 1 20 6.500c3 0 4.500 3 4.500 5.500v6z" fill="#b9bcc0" stroke="#333" stroke-width="1.500"/><path d="M7 7c4-7 12-4 13 1l-6 1z" fill="#777"/><circle cx="18.500" cy="15.500" r="6.500" fill="#fff"/><path d="M14.500 15a4 4 0 0 1 7.200-2M22.500 16a4 4 0 0 1-7.200 2M22.300 10.500v3h-3M14.800 20.500v-3h3" stroke="#1673c9" stroke-width="1.500"/>`)}
        <div class="lang"><span class="l5">ENG</span><br>IN</div><i></i>
        ${ico(24, 19, "0 0 24 19", svg`<g stroke="#1b1b1b" stroke-width="1.700"><path d="M.8 7a15.500 15.500 0 0 1 22.400 0M4 10.300a11 11 0 0 1 16 0M7.500 13.500a6.300 6.300 0 0 1 9 0"/></g><circle cx="12" cy="16.500" r="2" fill="#1b1b1b"/>`)}
        ${ico(23, 20, "0 0 23 20", svg`<path d="M1 7h3.500L10 2v16l-5.500-5H1z" stroke="#1b1b1b" stroke-width="1.600" stroke-linejoin="round"/><path d="M14 7l7.500 7.500M21.500 7L14 14.500" stroke="#1b1b1b" stroke-width="1.500"/>`)}
        ${ico(25, 17, "0 0 25 17", svg`<rect x="1" y="1.500" width="20" height="14" rx="3" stroke="#1b1b1b" stroke-width="1.600"/><rect x="3.500" y="4" width="15" height="9" rx="1" fill="#1b1b1b"/><path d="M23 6v5" stroke="#1b1b1b" stroke-width="2.400"/>`)}
        <div class="time"><span class="l5">15:31</span><br><span>08-08-2024</span></div><i></i>
        ${ico(20, 24, "0 0 20 24", svg`<path d="M10 0c4.500 0 7.500 3.300 7.500 7.500V14l2.500 4.500H0L2.500 14V7.500C2.500 3.300 5.500 0 10 0zM6.800 20.500h6.400c-.5 1.800-1.600 2.700-3.200 2.700s-2.700-.9-3.200-2.700z" fill="#0a4a9c"/>`)}
        <div class="cop">${ico(35, 35, "0 0 35 35", svg`<defs><linearGradient id="c1" x1="0" y1="0" x2="0" y2="1"><stop stop-color="#1b8fe8"/><stop offset=".5" stop-color="#35b978"/><stop offset="1" stop-color="#f6d23a"/></linearGradient><linearGradient id="c2" x1="1" y1="0" x2="0" y2="1"><stop stop-color="#a64de0"/><stop offset=".6" stop-color="#ea5fa0"/><stop offset="1" stop-color="#fa9a4c"/></linearGradient></defs><path d="M8 4c1-3 2-4 5-4h8c3 0 4 2 4.500 4l1.500 6h-7c-3 0-4 1-5 4l-2.500 9c-.5 1-1 1.500-3 1.500H4c-3 0-4.500-2-3.500-5z" fill="url(#c1)"/><path d="M18 0h3c3 0 4 2 4.500 4l1.500 6h-5z" fill="#1446c8"/><path d="M22 10h9c3 0 4.500 2 3.500 5l-3 10c-1 3-2 5-5 5h-9c-3 0-4-1.500-3.500-3l1-2c2 0 3-1 3.500-3z" fill="url(#c2)"/><path d="M20 10h3l-5 14h-4z" fill="#fff" opacity=".85"/>`)}<div class="pre">PRE</div></div>
      </div>
    </div>`;
  }

  render() {
    return html`${this.browser()}${this.awsNav()}
      <div class="body">${this.sidebar()}${this.content()}
        <div class="rail">${ico(17, 19, "0 0 17 19", svg`<path d="M8.500 1.300l7 4v8.400l-7 4-7-4V5.300z" stroke="#545b64" stroke-width="2.200" stroke-linejoin="round"/><circle cx="8.500" cy="9.500" r="2.600" fill="#545b64"/><path d="M9 10l5.500 3.500" stroke="#545b64" stroke-width="2.400"/>`)}</div>
      </div>
      <div class="foot">${shell}<span class="l1">CloudShell</span><span class="l3">Feedback</span><span class="l2">© 2024, Amazon Web Services, Inc. or its affiliates.</span><span class="l3">Privacy</span><span class="l3">Terms</span><span class="l4">Cookie preferences</span></div>
      ${this.taskbar()}`;
  }
}
